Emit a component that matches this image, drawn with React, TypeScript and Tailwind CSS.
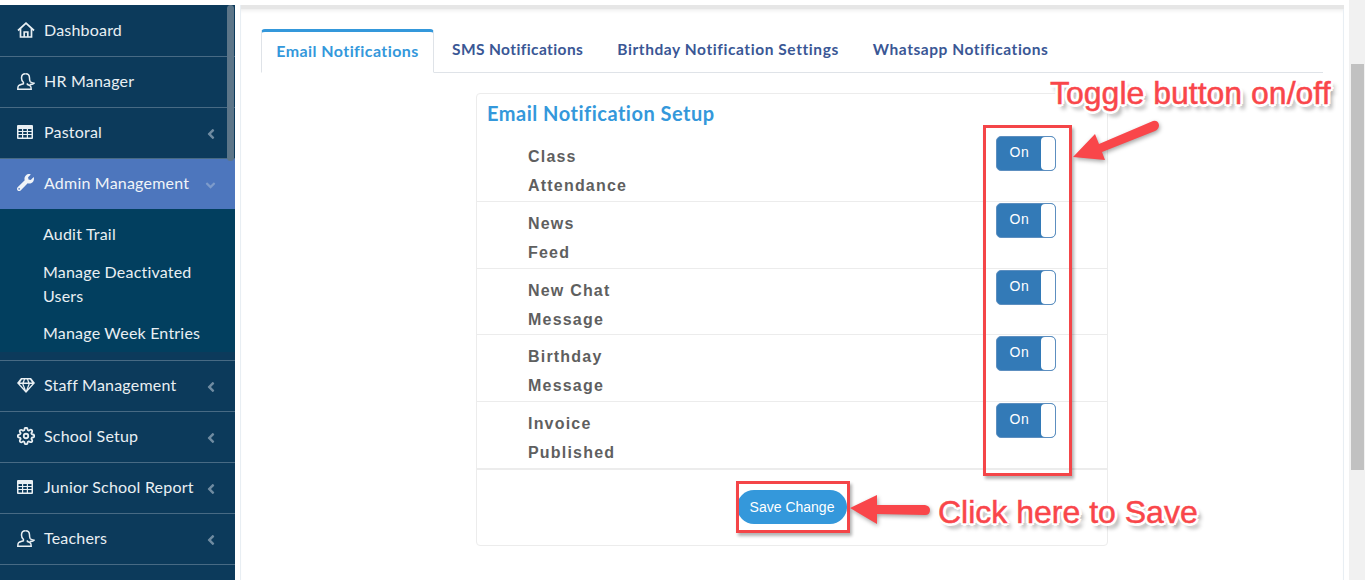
import React from 'react'
import { FaWrench, FaAngleLeft, FaAngleDown } from 'react-icons/fa'
import { FiSettings } from 'react-icons/fi'

const HomeIcon = () => (
  <svg width="18" height="16" viewBox="0 0 18 16" fill="none" stroke="currentColor" strokeWidth="1.7">
    <path d="M1 8.500L9 1.200L17 8.500" />
    <path d="M3.500 6.500V15H14.500V6.500" />
    <path d="M7.200 15V10H10.800V15" />
  </svg>
)

const UserIcon = () => (
  <svg width="18" height="17" viewBox="0 0 18 17" fill="none" stroke="currentColor" strokeWidth="1.500">
    <path d="M8.500.800c-2.500 0-4 1.800-4 4.200 0 1.900.8 3.500 1.900 4.300v1.400c-1.500.6-3.800 1-4.900 2-.5.500-.7 1.600-.7 3.500h13.400c0-1.700-.3-2.800-1-3.400-.8-.6-1.800-.9-2.800-1.300v-1.200" />
    <path d="M8.500.800c2.500 0 4 1.800 4 4.200 0 1.200.1 2.600.7 3.600.4.600 1.500 1.400 3.800 1.700-.9 1-2.700 1.300-4.200.9" />
  </svg>
)

const TableIcon = () => (
  <svg width="16" height="14" viewBox="0 0 16 14">
    <path
      fill="currentColor"
      fillRule="evenodd"
      d="M1 0H15a1 1 0 0 1 1 1V13a1 1 0 0 1-1 1H1a1 1 0 0 1-1-1V1a1 1 0 0 1 1-1ZM1.500 4V6H5V4ZM6.200 4V6H9.800V4ZM11 4V6H14.500V4ZM1.500 7V9H5V7ZM6.200 7V9H9.800V7ZM11 7V9H14.500V7ZM1.500 10V12.500H5V10ZM6.200 10V12.500H9.800V10ZM11 10V12.500H14.500V10Z"
    />
  </svg>
)

const GemIcon = () => (
  <svg width="18" height="15" viewBox="0 0 18 15">
    <path fill="currentColor" d="M4 0H14L18 5L9 15L0 5Z" />
    <path fill="#0c3a5b" d="M2.800 6H5.200L7 10.800ZM12.800 6H15.200L11 10.800ZM6.500 6H11.500L9 12.500ZM5 1.500H6.800L5.400 4.400H3ZM8 1.500H10L11 4.400H7ZM11.200 1.500H13L15 4.400H12.600Z" />
  </svg>
)

const menuTop = [
  { label: 'Dashboard', icon: <HomeIcon /> },
  { label: 'HR Manager', icon: <UserIcon /> },
  { label: 'Pastoral', icon: <TableIcon />, arrow: true },
]

const menuBottom = [
  { label: 'Staff Management', icon: <GemIcon />, arrow: true },
  { label: 'School Setup', icon: <FiSettings size={18} strokeWidth={2.4} />, arrow: true },
  { label: 'Junior School Report', icon: <TableIcon />, arrow: true },
  { label: 'Teachers', icon: <UserIcon />, arrow: true },
]

const rows = [
  ['Class', 'Attendance'],
  ['News', 'Feed'],
  ['New Chat', 'Message'],
  ['Birthday', 'Message'],
  ['Invoice', 'Published'],
]

const calloutText =
  "absolute whitespace-nowrap font-['Liberation_Sans',sans-serif] text-[32px] leading-[38px] text-[#f9464a] [-webkit-text-stroke:0.5px_#f9464a] [text-shadow:-3px_0_0_#fff,3px_0_0_#fff,0_-3px_0_#fff,0_3px_0_#fff,-2px_-2px_0_#fff,2px_-2px_0_#fff,-2px_2px_0_#fff,2px_2px_0_#fff,4px_5px_4px_rgba(0,0,0,0.45)]"

const MenuItem = ({ label, icon, arrow }: { label: string; icon: React.ReactNode; arrow?: boolean }) => (
  <div className="flex h-[51px] items-center border-b border-[#486a84] pb-[2px] pl-[17px] pr-[16px] text-[16px] text-[#e9eff3]">
    <span className="flex w-[27px] shrink-0 items-center">{icon}</span>
    <span className="flex-1 tracking-[0.2px]">{label}</span>
    {arrow && <FaAngleLeft size={16} className="mt-[3px] text-[#6f8ba1]" />}
  </div>
)

const Toggle = () => (
  <div className="flex h-[35px] w-[60px] overflow-hidden rounded-[5px] border border-[#5d8fc0] bg-[#337ab7]">
    <span className="flex-1 pb-[1px] pl-[1px] text-center text-[14px] font-normal leading-[31px] tracking-[0.6px] text-white">On</span>
    <span className="w-[14px] rounded-[4px] bg-white" />
  </div>
)

export default function App() {
  return (
    <div className="relative h-[580px] w-[1365px] overflow-hidden bg-white font-['Lato','Noto_Sans',sans-serif]">
      <div className="h-[5px] bg-white" />
      <div className="flex h-[575px]">
        {/* Sidebar */}
        <aside className="relative w-[235px] shrink-0 bg-[#0c3a5b] pt-[1px]">
          {menuTop.map((m) => (
            <MenuItem key={m.label} {...m} />
          ))}
          <div className="flex h-[50px] items-center bg-[#4d76bd] pb-[3px] pl-[17px] pr-[17px] text-[16px] text-[#f0f4f8]">
            <span className="flex w-[27px] shrink-0 items-center">
              <FaWrench size={17} />
            </span>
            <span className="flex-1 tracking-[0.2px]">Admin Management</span>
            <FaAngleDown size={15} className="mt-[5px] text-[#7d9bcb]" />
          </div>
          <div className="bg-[#023f5f] pb-[7px] pl-[43px] pr-4 pt-[13px] text-[16px] leading-[24px] tracking-[0.2px] text-[#e9eff3]">
            <div className="mb-[14px]">Audit Trail</div>
            <div className="mb-[13px]">
              Manage Deactivated
              <br />
              Users
            </div>
            <div>Manage Week Entries</div>
          </div>
          <div className="h-[9px] border-b border-[#486a84]" />
          {menuBottom.map((m) => (
            <MenuItem key={m.label} {...m} />
          ))}
          <div className="absolute left-[227px] top-0 h-[156px] w-[7px] rounded-[4px] bg-[#5c7588]" />
        </aside>

        {/* Main */}
        <main className="flex-1 pl-[5px]">
          <div className="w-[1104px]">
            <div className="h-[4px] border-l border-[#e8eef3] bg-[#e6e6e6]" />
            <div className="h-[571px] border-x border-[#e8eef3] pl-[20px] pt-[20px] shadow-[inset_0_4px_4px_-3px_#e8e8e8]">
              <div className="flex h-[44px] w-[1062px] items-end border-b border-[#dfe3e8]">
                <div className="-mb-px flex h-[44px] w-[173px] items-center justify-center rounded-t-[4px] border-x border-b border-t-[3px] border-x-[#dfe3e8] border-b-white border-t-[#3498db] pb-[3px] text-[16px] font-bold tracking-[0.42px] text-[#3498db]">
                  Email Notifications
                </div>
                <div className="flex h-[44px] items-center pb-[1px] pl-[18px] text-[15.5px] font-bold text-[#3a5795]">
                  <span className="tracking-[0.4px]">SMS Notifications</span>
                  <span className="ml-[34px] tracking-[0.58px]">Birthday Notification Settings</span>
                  <span className="ml-[34px] tracking-[0.55px]">Whatsapp Notifications</span>
                </div>
              </div>

              {/* Card */}
              <div className="ml-[215px] mt-[20px] h-[453px] w-[632px] rounded-[4px] border border-[#ececec]">
                <h3 className="h-[41px] pl-[10px] pt-[5px] text-[20px] font-bold leading-[28px] tracking-[0.5px] text-[#3498db]">
                  Email Notification Setup
                </h3>
                {rows.map((r) => (
                  <div key={r[0]} className="flex h-[66.8px] border-b border-[#ececec] pl-[51px] pr-[51px] pt-[1px] font-['Liberation_Sans',sans-serif] text-[16px] font-bold leading-[29px] tracking-[1.2px] text-[#5f5f5f]">
                    <div className="flex-1 pt-[6px]">
                      {r[0]}
                      <br />
                      {r[1]}
                    </div>
                    <Toggle />
                  </div>
                ))}
                <div className="flex justify-center border-t border-[#ececec] pt-[20px]">
                  <button className="h-[34px] w-[110px] rounded-full bg-[#3498db] pt-[1px] font-['Liberation_Sans',sans-serif] text-[14px] text-white">
                    Save Change
                  </button>
                </div>
              </div>
            </div>
          </div>
        </main>
      </div>

      {/* Page scrollbar */}
      <div className="absolute bottom-0 right-0 top-0 w-[16px] bg-[#f1f1f1]">
        <div className="absolute left-[2px] right-[1px] top-[64px] h-[406px] bg-[#c1c1c1]" />
      </div>

      {/* Annotations */}
      <div className="absolute left-[983px] top-[125px] h-[351px] w-[89px] border-[3px] border-[#f44548] shadow-[2px_3px_3px_rgba(0,0,0,0.3)]" />
      <div className="absolute left-[736px] top-[481px] h-[52px] w-[114px] border-[3px] border-[#f44548] shadow-[2px_3px_3px_rgba(0,0,0,0.3)]" />
      <svg className="absolute left-0 top-0 drop-shadow-[1px_2px_2px_rgba(0,0,0,0.35)]" width="1365" height="580" fill="#f9464a">
        <path d="M1073 157L1095 134L1099 144L1153 121Q1158 120 1159 125Q1159 129 1155 131L1102 152L1105 160Z" />
        <path d="M850 508L877 495V505L925 505Q930 506 930 510Q930 515 925 515L877 514V524Z" />
      </svg>
      <div className={`${calloutText} left-[1050px] top-[74px]`}>Toggle button on/off</div>
      <div className={`${calloutText} left-[938px] top-[493px]`}>Click here to Save</div>
    </div>
  )
}
